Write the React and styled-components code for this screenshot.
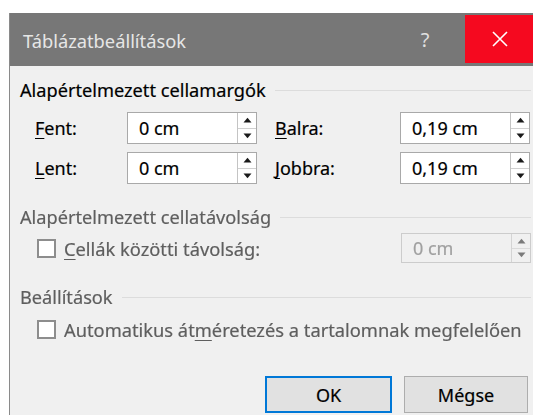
import React from 'react'
import styled, { createGlobalStyle } from 'styled-components';

const GlobalStyle = createGlobalStyle`
    html, body {
        margin: 0;
        padding: 0;
        background: #ffffff;
    }
    body {
        font-family: "Noto Sans", "Open Sans", sans-serif;
        overflow: hidden;
        -webkit-text-stroke: 0.2px currentColor;
    }
`;

const Mn = ({ children }) => <u>{children}</u>;

function Spin({ value, disabled }) {
    return (
        <SpinBox disabled={disabled}>
            <SpinValue disabled={disabled}>{value}</SpinValue>
            <SpinArrows disabled={disabled}>
                <ArrowCell>
                    <svg width="9" height="6" viewBox="0 0 9 6"><path d="M0.5 5.5 L4.5 0.8 L8.5 5.5 Z" fill="currentColor"/></svg>
                </ArrowCell>
                <ArrowCell>
                    <svg width="9" height="6" viewBox="0 0 9 6"><path d="M0.5 0.5 L4.5 5.2 L8.5 0.5 Z" fill="currentColor"/></svg>
                </ArrowCell>
            </SpinArrows>
        </SpinBox>
    )
}

function App() {
    return (
        <>
            <GlobalStyle />
            <StyledDialog>
                <div className="title__bar">
                    <span className="title__text">Táblázatbeállítások</span>
                    <span className="title__help">?</span>
                    <div className="title__close">
                        <svg width="18" height="18" viewBox="0 0 18 18">
                            <path d="M2 2 L16 16 M16 2 L2 16" stroke="#ffffff" strokeWidth="1.6"/>
                        </svg>
                    </div>
                </div>
                <div className="dialog__body">
                    <GroupHead>Alapértelmezett cellamargók</GroupHead>
                    <MarginGrid>
                        <FieldLabel><Mn>F</Mn>ent:</FieldLabel>
                        <Spin value="0 cm" />
                        <FieldLabel className="right"><Mn>B</Mn>alra:</FieldLabel>
                        <Spin value="0,19 cm" />
                        <FieldLabel><Mn>L</Mn>ent:</FieldLabel>
                        <Spin value="0 cm" />
                        <FieldLabel className="right"><Mn>J</Mn>obbra:</FieldLabel>
                        <Spin value="0,19 cm" />
                    </MarginGrid>

                    <Faded>
                        <GroupHead disabled top="23px">Alapértelmezett cellatávolság</GroupHead>
                        <SpacingRow>
                            <CheckRow disabled>
                                <CheckBox />
                                <span><Mn>C</Mn>ellák közötti távolság:</span>
                            </CheckRow>
                            <Spin value="0 cm" disabled />
                        </SpacingRow>

                        <GroupHead disabled top="24px">Beállítások</GroupHead>
                        <CheckRow disabled className="auto__fit">
                            <CheckBox />
                            <span>Automatikus át<Mn>m</Mn>éretezés a tartalomnak megfelelően</span>
                        </CheckRow>
                    </Faded>

                    <ButtonBar>
                        <DialogButton primary>OK</DialogButton>
                        <DialogButton>Mégse</DialogButton>
                    </ButtonBar>
                </div>
            </StyledDialog>
        </>
    )
}

const StyledDialog = styled.div`
    margin: 13px 0 0 9px;
    width: 524px;
    height: 402px;
    border-left: 1px solid #8a8a8a;
    display: flex;
    flex-direction: column;
    background: #f0f0f0;
    >.title__bar{
        height: 53px;
        flex: none;
        background: #777777;
        display: flex;
        align-items: center;
        >.title__text{
            color: #e6e6e6;
            font-size: 18.3px;
            padding-left: 13px;
            flex: 1;
            margin-top: 1px;
            -webkit-text-stroke: 0;
        }
        >.title__help{
            color: #e0e0e0;
            font-size: 20px;
            width: 40px;
            text-align: center;
            margin-right: 20px;
            -webkit-text-stroke: 0;
        }
        >.title__close{
            width: 69px;
            height: 48px;
            margin-top: -1px;
            background: #f5091f;
            display: flex;
            align-items: center;
            justify-content: center;
        }
    }
    >.dialog__body{
        flex: 1;
        padding: 0 3px 0 10px;
        display: flex;
        flex-direction: column;
    }
`;

const GroupHead = styled.div`
    display: flex;
    align-items: center;
    gap: 9px;
    height: 20px;
    margin-top: ${p => p.top || '14px'};
    font-size: 18.2px;
    color: ${p => p.disabled ? '#5e5e5e' : '#000000'};
    white-space: nowrap;
    &::after{
        content: "";
        flex: 1;
        height: 1px;
        background: #dcdcdc;
    }
`;

const MarginGrid = styled.div`
    display: grid;
    grid-template-columns: 92px 130px 143px 130px;
    row-gap: 8px;
    padding-left: 15px;
    margin-top: 12px;
    align-items: center;
    >.right{
        padding-left: 18px;
    }
`;

const FieldLabel = styled.label`
    font-size: 18px;
    color: #000000;
    >u{
        text-decoration-thickness: 1px;
        text-underline-offset: 3px;
    }
`;

const SpinBox = styled.div`
    display: flex;
    height: 32px;
    width: 130px;
    box-sizing: border-box;
    border: 1px solid ${p => p.disabled ? '#cccccc' : '#a9a9a9'};
    background: ${p => p.disabled ? '#f0f0f0' : '#ffffff'};
`;

const SpinValue = styled.div`
    flex: 1;
    display: flex;
    align-items: center;
    padding-left: 11px;
    font-size: 18px;
    color: ${p => p.disabled ? '#a0a0a0' : '#000000'};
    border-right: 1px solid ${p => p.disabled ? '#d4d4d4' : '#c4c4c4'};
`;

const SpinArrows = styled.div`
    width: 18px;
    display: flex;
    flex-direction: column;
    color: ${p => p.disabled ? '#7a7a7a' : '#1a1a1a'};
    >div + div{
        border-top: 1px solid ${p => p.disabled ? '#dadada' : '#d0d0d0'};
    }
`;

const ArrowCell = styled.div`
    flex: 1;
    display: flex;
    align-items: center;
    justify-content: center;
`;

const Faded = styled.div`
    display: flex;
    flex-direction: column;
    filter: blur(0.7px);
`;

const SpacingRow = styled.div`
    display: flex;
    align-items: center;
    justify-content: space-between;
    margin-top: 6px;
    padding-left: 17px;
    >div:last-child{
        height: 30px;
    }
`;

const CheckRow = styled.div`
    display: flex;
    align-items: center;
    gap: 8px;
    font-size: 18.3px;
    color: ${p => p.disabled ? '#5e5e5e' : '#000000'};
    white-space: nowrap;
    u{
        text-underline-offset: 3px;
    }
    &.auto__fit{
        margin-top: 10px;
        padding-left: 17px;
    }
`;

const CheckBox = styled.span`
    width: 19px;
    height: 19px;
    flex: none;
    box-sizing: border-box;
    border: 2px solid #8d8d8d;
    background: #ffffff;
    display: inline-block;
`;

const ButtonBar = styled.div`
    display: flex;
    gap: 12px;
    margin-top: 34px;
    padding-left: 245px;
`;

const DialogButton = styled.button`
    font-family: inherit;
    font-size: 18px;
    color: #000000;
    height: 37px;
    width: ${p => p.primary ? '127px' : '124px'};
    background: #e1e1e1;
    border: ${p => p.primary ? '2px solid #0078d7' : '1px solid #adadad'};
    padding: 0;
    -webkit-text-stroke: 0.2px #000000;
`;

export default App
